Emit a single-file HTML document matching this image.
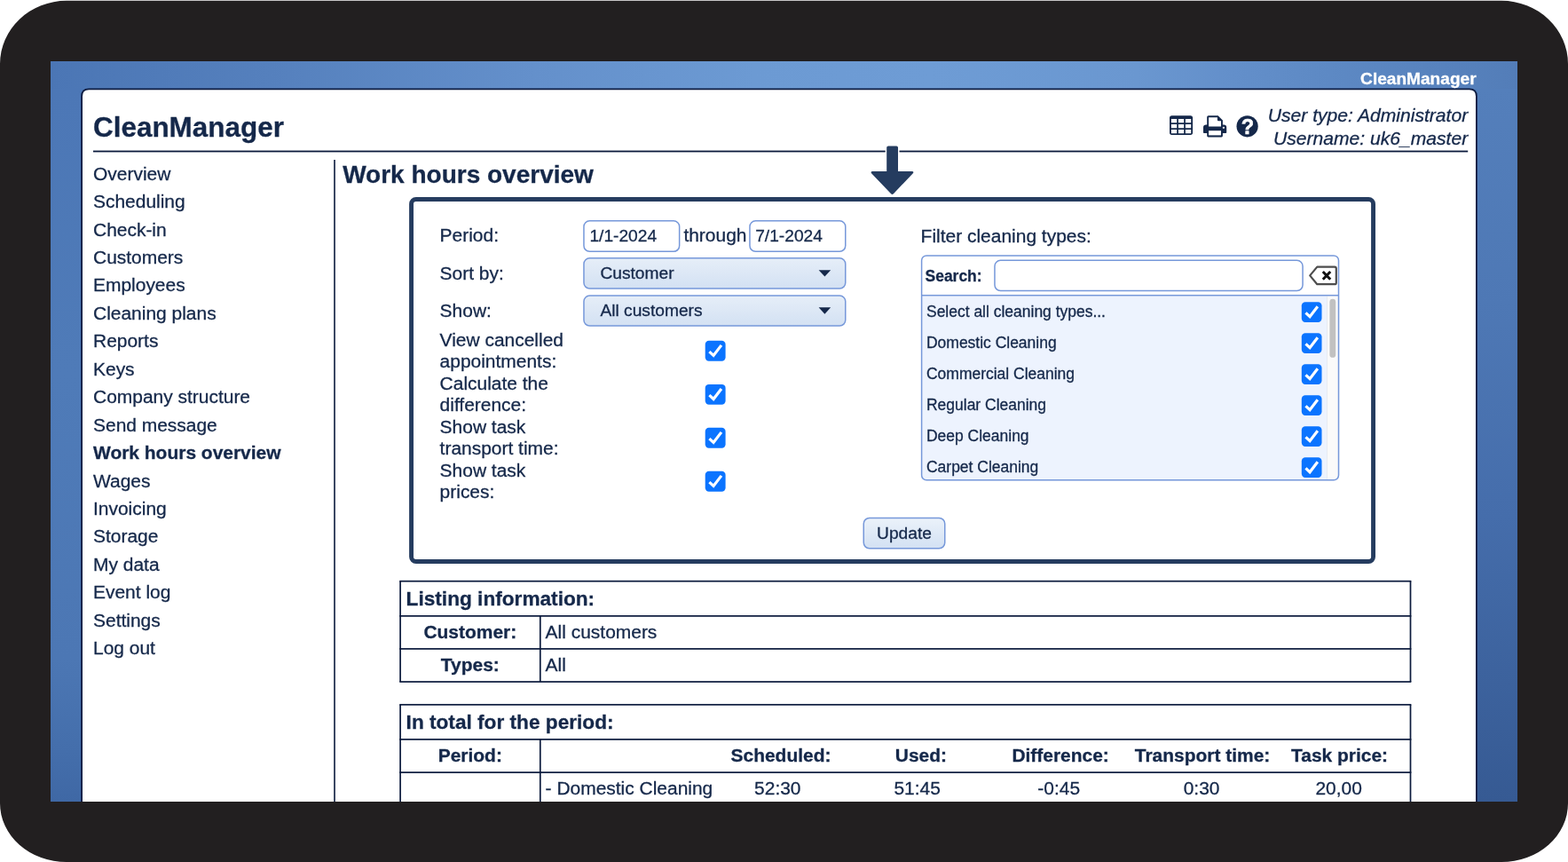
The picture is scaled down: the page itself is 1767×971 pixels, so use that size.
<!DOCTYPE html>
<html lang="en">
<head>
<meta charset="utf-8">
<title>CleanManager - Work hours overview</title>
<style>
*{box-sizing:border-box;margin:0;padding:0}
html,body{width:1767px;height:971px;overflow:hidden;background:#fff}
body{position:relative;will-change:transform;font-family:"Liberation Sans",Arial,Helvetica,sans-serif;color:#15284a}
#geo{position:absolute;left:0;top:0;width:1767px;height:971px;display:block}
#clip{position:absolute;left:57px;top:69px;width:1653px;height:834px;overflow:hidden}
#txt{position:absolute;left:-57px;top:-69px;width:1767px;height:971px}
.t{position:absolute;white-space:nowrap;line-height:1;-webkit-text-stroke:0.3px currentColor}
h1,h2,a,label{margin:0;padding:0;display:block;color:inherit;text-decoration:none}
</style>
</head>
<body>
<svg id="geo" width="1767" height="971" viewBox="0 0 1767 971">
<defs>
<linearGradient id="bgt" gradientUnits="userSpaceOnUse" x1="57" y1="0" x2="1710" y2="0">
<stop offset="0" stop-color="#4b76b5"/><stop offset="0.15" stop-color="#5580bd"/><stop offset="0.33" stop-color="#6490cb"/><stop offset="0.48" stop-color="#6c9ad3"/><stop offset="0.6" stop-color="#6e9cd5"/><stop offset="0.74" stop-color="#6a97d0"/><stop offset="0.806" stop-color="#638fca"/><stop offset="0.872" stop-color="#5d89c4"/><stop offset="0.938" stop-color="#5883be"/><stop offset="1" stop-color="#537db8"/></linearGradient>
<linearGradient id="bgl" gradientUnits="userSpaceOnUse" x1="0" y1="100" x2="0" y2="903">
<stop offset="0" stop-color="#4c77b6"/><stop offset="0.4" stop-color="#4f7bb8"/><stop offset="0.8" stop-color="#4c77b4"/><stop offset="0.93" stop-color="#446eab"/><stop offset="1" stop-color="#3f68a5"/></linearGradient>
<linearGradient id="bgr" gradientUnits="userSpaceOnUse" x1="0" y1="100" x2="0" y2="903">
<stop offset="0" stop-color="#547fbb"/><stop offset="0.3" stop-color="#4e78b5"/><stop offset="0.6" stop-color="#456dab"/><stop offset="1" stop-color="#365a93"/></linearGradient>
<linearGradient id="sel" x1="0" y1="0" x2="0" y2="1"><stop offset="0" stop-color="#e6eef8"/><stop offset="1" stop-color="#d3e1f3"/></linearGradient>
<linearGradient id="btn" x1="0" y1="0" x2="0" y2="1"><stop offset="0" stop-color="#ebf2fa"/><stop offset="1" stop-color="#d3e1f3"/></linearGradient>
<clipPath id="scr"><rect x="57" y="69" width="1653" height="834"/></clipPath>
<clipPath id="fl"><rect x="1037.85" y="287.15" width="471.4" height="254.4" rx="6"/></clipPath>
</defs>
<path d="M0 72 A75 71.2 0 0 1 75 0.8 H1692 A75 71.2 0 0 1 1767 72 V905 A75 66 0 0 1 1692 971 H75 A75 66 0 0 1 0 905 Z" fill="#221f20"/>
<rect x="57" y="69" width="1653" height="834" fill="url(#bgt)"/>
<rect x="57" y="100" width="40" height="803" fill="url(#bgl)"/>
<rect x="1660" y="100" width="50" height="803" fill="url(#bgr)"/>
<path d="M92.1 904 V108.4 Q92.1 100.4 100.1 100.4 H1655.9 Q1663.9 100.4 1663.9 108.4 V904 Z" fill="#fff" stroke="#0c1b40" stroke-width="1.8" clip-path="url(#scr)"/>
<rect x="105.00" y="169.60" width="1549.20" height="1.8" fill="#0b1a3c"/>
<g transform="translate(1318 130.2)" fill="#15284a">
<path fill-rule="evenodd" d="M2.6 0 H23.5 Q26.1 0 26.1 2.6 V19.1 Q26.1 21.7 23.5 21.7 H2.6 Q0 21.7 0 19.1 V2.6 Q0 0 2.6 0 Z
M1.9 3.8 V8.0 H8.2 V3.8 Z M9.95 3.8 V8.0 H16.15 V3.8 Z M17.9 3.8 V8.0 H24.2 V3.8 Z
M1.9 9.8 V14.0 H8.2 V9.8 Z M9.95 9.8 V14.0 H16.15 V9.8 Z M17.9 9.8 V14.0 H24.2 V9.8 Z
M1.9 15.8 V20.0 H8.2 V15.8 Z M9.95 15.8 V20.0 H16.15 V15.8 Z M17.9 15.8 V20.0 H24.2 V15.8 Z"/></g>
<g transform="translate(1356 130.2)">
<path d="M0 13.4 Q0 10.2 3.2 10.2 H23 Q26.2 10.2 26.2 13.4 V19 Q26.2 19.8 25.4 19.8 H0.8 Q0 19.8 0 19 Z" fill="#15284a"/>
<path d="M4.2 13 V1.6 Q4.2 0 5.8 0 H16.6 L21.9 5.3 V13 Z" fill="#15284a"/>
<path d="M6.1 12.3 V1.95 H15.9 V4.9 Q15.9 6.1 17.1 6.1 H20 V12.3 Z" fill="#fff"/>
<rect x="4.2" y="15.2" width="17.7" height="9" rx="1.4" fill="#15284a"/>
<rect x="6.1" y="17" width="13.9" height="5.2" fill="#fff"/>
<circle cx="22.9" cy="13.6" r="1.15" fill="#fff"/>
</g>
<circle cx="1405.6" cy="142.3" r="12.1" fill="#15284a"/>
<rect x="376.20" y="180.00" width="1.6" height="723.00" fill="#0b1a3c"/>
<rect x="463.55" y="224.45" width="1084" height="408.05" rx="5.2" fill="#fff" stroke="#253c5f" stroke-width="4.9"/>
<path d="M1001 164.4 H1010.2 Q1012 164.4 1012 166.2 V193.1 H1027.6 Q1030.6 193.1 1028.6 195.4 L1006.9 218.3 Q1005.5 219.7 1004.1 218.3 L982.3 195.4 Q980.4 193.1 983.4 193.1 H999.2 V166.2 Q999.2 164.4 1001 164.4 Z" fill="#253c5f" stroke="#fff" stroke-width="3" paint-order="stroke"/>
<g transform="translate(794.70 383.80) scale(0.9957)"><rect width="23" height="23" rx="4.2" fill="#0b74ff"/><path d="M4.7 12.3 L9.4 16.7 L18.3 5.1" fill="none" stroke="#fff" stroke-width="3.2"/></g>
<g transform="translate(794.70 432.90) scale(0.9957)"><rect width="23" height="23" rx="4.2" fill="#0b74ff"/><path d="M4.7 12.3 L9.4 16.7 L18.3 5.1" fill="none" stroke="#fff" stroke-width="3.2"/></g>
<g transform="translate(794.70 481.80) scale(0.9957)"><rect width="23" height="23" rx="4.2" fill="#0b74ff"/><path d="M4.7 12.3 L9.4 16.7 L18.3 5.1" fill="none" stroke="#fff" stroke-width="3.2"/></g>
<g transform="translate(794.70 530.80) scale(0.9957)"><rect width="23" height="23" rx="4.2" fill="#0b74ff"/><path d="M4.7 12.3 L9.4 16.7 L18.3 5.1" fill="none" stroke="#fff" stroke-width="3.2"/></g>
<rect x="657.95" y="248.85" width="107.70" height="34.40" rx="6.5" fill="#fff" stroke="#7698da" stroke-width="1.5"/>
<rect x="844.95" y="248.85" width="107.80" height="34.40" rx="6.5" fill="#fff" stroke="#7698da" stroke-width="1.5"/>
<rect x="657.95" y="290.85" width="294.80" height="34.20" rx="6.5" fill="url(#sel)" stroke="#7698da" stroke-width="1.5"/>
<path d="M922.6 304.2 H936.2 L929.4 311.6 Z" fill="#15284a"/>
<rect x="657.95" y="333.05" width="294.80" height="34.00" rx="6.5" fill="url(#sel)" stroke="#7698da" stroke-width="1.5"/>
<path d="M922.6 346.3 H936.2 L929.4 353.7 Z" fill="#15284a"/>
<g clip-path="url(#fl)"><rect x="1038" y="287.5" width="472" height="254" fill="#fff"/><rect x="1038" y="332.8" width="472" height="210" fill="#edf3fe"/><rect x="1495.2" y="333.5" width="13.4" height="208" fill="#fafafa"/><rect x="1495" y="333.5" width="0.8" height="208" fill="#e4e8ef"/></g>
<rect x="1038.50" y="331.95" width="470.00" height="1.5" fill="#7698da"/>
<rect x="1498.4" y="336.8" width="6.8" height="66" rx="3.4" fill="#c1c1c1"/>
<rect x="1038.6" y="287.9" width="469.9" height="252.9" rx="5.5" fill="none" stroke="#7698da" stroke-width="1.5"/>
<rect x="1120.95" y="293.35" width="347.10" height="34.20" rx="6.5" fill="#fff" stroke="#7698da" stroke-width="1.5"/>
<g transform="translate(1474 298)">
<path d="M10.3 2.6 H30 Q31.8 2.6 31.8 4.4 V20.4 Q31.8 22.2 30 22.2 H10.3 L2.2 12.4 Z" fill="#fff" stroke="#4d4d4d" stroke-width="2.2" stroke-linejoin="round"/>
<path d="M16.8 8 L25.2 16.8 M25.2 8 L16.8 16.8" stroke="#111" stroke-width="3" fill="none"/></g>
<g transform="translate(1466.80 340.20) scale(0.9870)"><rect width="23" height="23" rx="4.2" fill="#0b74ff"/><path d="M4.7 12.3 L9.4 16.7 L18.3 5.1" fill="none" stroke="#fff" stroke-width="3.2"/></g>
<g transform="translate(1466.80 375.22) scale(0.9870)"><rect width="23" height="23" rx="4.2" fill="#0b74ff"/><path d="M4.7 12.3 L9.4 16.7 L18.3 5.1" fill="none" stroke="#fff" stroke-width="3.2"/></g>
<g transform="translate(1466.80 410.24) scale(0.9870)"><rect width="23" height="23" rx="4.2" fill="#0b74ff"/><path d="M4.7 12.3 L9.4 16.7 L18.3 5.1" fill="none" stroke="#fff" stroke-width="3.2"/></g>
<g transform="translate(1466.80 445.26) scale(0.9870)"><rect width="23" height="23" rx="4.2" fill="#0b74ff"/><path d="M4.7 12.3 L9.4 16.7 L18.3 5.1" fill="none" stroke="#fff" stroke-width="3.2"/></g>
<g transform="translate(1466.80 480.28) scale(0.9870)"><rect width="23" height="23" rx="4.2" fill="#0b74ff"/><path d="M4.7 12.3 L9.4 16.7 L18.3 5.1" fill="none" stroke="#fff" stroke-width="3.2"/></g>
<g transform="translate(1466.80 515.30) scale(0.9870)"><rect width="23" height="23" rx="4.2" fill="#0b74ff"/><path d="M4.7 12.3 L9.4 16.7 L18.3 5.1" fill="none" stroke="#fff" stroke-width="3.2"/></g>
<rect x="973.25" y="583.45" width="91.50" height="34.30" rx="6.5" fill="url(#btn)" stroke="#7698da" stroke-width="1.5"/>
<rect x="450.25" y="653.85" width="1140.10" height="1.7" fill="#0b1a3c"/>
<rect x="450.25" y="693.05" width="1140.10" height="1.7" fill="#0b1a3c"/>
<rect x="450.25" y="730.05" width="1140.10" height="1.7" fill="#0b1a3c"/>
<rect x="450.25" y="767.15" width="1140.10" height="1.7" fill="#0b1a3c"/>
<rect x="450.25" y="654.70" width="1.7" height="113.30" fill="#0b1a3c"/>
<rect x="1588.65" y="654.70" width="1.7" height="113.30" fill="#0b1a3c"/>
<rect x="607.95" y="693.90" width="1.7" height="74.10" fill="#0b1a3c"/>
<rect x="450.25" y="792.95" width="1140.10" height="1.7" fill="#0b1a3c"/>
<rect x="450.25" y="832.05" width="1140.10" height="1.7" fill="#0b1a3c"/>
<rect x="450.25" y="869.25" width="1140.10" height="1.7" fill="#0b1a3c"/>
<rect x="450.25" y="793.80" width="1.7" height="109.20" fill="#0b1a3c"/>
<rect x="1588.65" y="793.80" width="1.7" height="109.20" fill="#0b1a3c"/>
<rect x="607.95" y="832.90" width="1.7" height="70.10" fill="#0b1a3c"/>
</svg>
<div id="clip"><div id="txt">
<div class="t" style="right:103.40px;top:79.00px;font-size:19.1px;font-weight:700;color:#fff;">CleanManager</div>
<h1 class="t" style="left:105.00px;top:128.00px;font-size:31.45px;font-weight:700;">CleanManager</h1>
<div class="t" style="right:112.80px;top:119.00px;font-size:21.1px;font-style:italic;">User type: Administrator</div>
<div class="t" style="right:112.80px;top:145.00px;font-size:21.1px;font-style:italic;">Username: uk6_master</div>
<div class="t" style="left:1105.90px;width:600px;text-align:center;top:132.00px;font-size:23.5px;font-weight:700;color:#fff;-webkit-text-stroke:0.6px #fff;">?</div>
<nav>
<a class="t" style="left:105.00px;top:186.00px;font-size:20.96px;">Overview</a>
<a class="t" style="left:105.00px;top:217.00px;font-size:20.96px;">Scheduling</a>
<a class="t" style="left:105.00px;top:249.00px;font-size:20.96px;">Check-in</a>
<a class="t" style="left:105.00px;top:280.00px;font-size:20.96px;">Customers</a>
<a class="t" style="left:105.00px;top:311.00px;font-size:20.96px;">Employees</a>
<a class="t" style="left:105.00px;top:343.00px;font-size:20.96px;">Cleaning plans</a>
<a class="t" style="left:105.00px;top:374.00px;font-size:20.96px;">Reports</a>
<a class="t" style="left:105.00px;top:406.00px;font-size:20.96px;">Keys</a>
<a class="t" style="left:105.00px;top:437.00px;font-size:20.96px;">Company structure</a>
<a class="t" style="left:105.00px;top:469.00px;font-size:20.96px;">Send message</a>
<a class="t" style="left:105.00px;top:500.00px;font-size:20.96px;font-weight:700;">Work hours overview</a>
<a class="t" style="left:105.00px;top:532.00px;font-size:20.96px;">Wages</a>
<a class="t" style="left:105.00px;top:563.00px;font-size:20.96px;">Invoicing</a>
<a class="t" style="left:105.00px;top:594.00px;font-size:20.96px;">Storage</a>
<a class="t" style="left:105.00px;top:626.00px;font-size:20.96px;">My data</a>
<a class="t" style="left:105.00px;top:657.00px;font-size:20.96px;">Event log</a>
<a class="t" style="left:105.00px;top:689.00px;font-size:20.96px;">Settings</a>
<a class="t" style="left:105.00px;top:720.00px;font-size:20.96px;">Log out</a>
</nav>
<h2 class="t" style="left:386.20px;top:183.00px;font-size:28px;font-weight:700;">Work hours overview</h2>
<div class="t" style="left:495.60px;top:255.00px;font-size:20.96px;">Period:</div>
<div class="t" style="left:495.60px;top:298.00px;font-size:20.96px;">Sort by:</div>
<div class="t" style="left:495.60px;top:340.00px;font-size:20.96px;">Show:</div>
<label class="t" style="left:495.60px;top:373.00px;font-size:20.96px;">View cancelled</label>
<label class="t" style="left:495.60px;top:397.00px;font-size:20.96px;">appointments:</label>
<label class="t" style="left:495.60px;top:422.00px;font-size:20.96px;">Calculate the</label>
<label class="t" style="left:495.60px;top:446.00px;font-size:20.96px;">difference:</label>
<label class="t" style="left:495.60px;top:471.00px;font-size:20.96px;">Show task</label>
<label class="t" style="left:495.60px;top:495.00px;font-size:20.96px;">transport time:</label>
<label class="t" style="left:495.60px;top:520.00px;font-size:20.96px;">Show task</label>
<label class="t" style="left:495.60px;top:544.00px;font-size:20.96px;">prices:</label>
<div class="t" style="left:664.40px;top:256.00px;font-size:19.2px;">1/1-2024</div>
<div class="t" style="left:770.40px;top:255.00px;font-size:20.96px;">through</div>
<div class="t" style="left:851.20px;top:256.00px;font-size:19.2px;">7/1-2024</div>
<div class="t" style="left:676.40px;top:298.00px;font-size:19.2px;">Customer</div>
<div class="t" style="left:676.40px;top:340.00px;font-size:19.2px;">All customers</div>
<div class="t" style="left:1037.60px;top:256.00px;font-size:20.96px;">Filter cleaning types:</div>
<div class="t" style="left:1042.60px;top:303.00px;font-size:17.45px;font-weight:700;">Search:</div>
<div class="t" style="left:1044.00px;top:343.00px;font-size:17.48px;">Select all cleaning types...</div>
<div class="t" style="left:1044.00px;top:378.00px;font-size:17.48px;">Domestic Cleaning</div>
<div class="t" style="left:1044.00px;top:413.00px;font-size:17.48px;">Commercial Cleaning</div>
<div class="t" style="left:1044.00px;top:448.00px;font-size:17.48px;">Regular Cleaning</div>
<div class="t" style="left:1044.00px;top:483.00px;font-size:17.48px;">Deep Cleaning</div>
<div class="t" style="left:1044.00px;top:518.00px;font-size:17.48px;">Carpet Cleaning</div>
<div class="t" style="left:719.00px;width:600px;text-align:center;top:591.00px;font-size:19.2px;">Update</div>
<div class="t" style="left:457.60px;top:663.00px;font-size:22.65px;font-weight:700;">Listing information:</div>
<div class="t" style="left:229.80px;width:600px;text-align:center;top:702.00px;font-size:20.96px;font-weight:700;">Customer:</div>
<div class="t" style="left:614.60px;top:702.00px;font-size:20.96px;">All customers</div>
<div class="t" style="left:229.80px;width:600px;text-align:center;top:739.00px;font-size:20.96px;font-weight:700;">Types:</div>
<div class="t" style="left:614.60px;top:739.00px;font-size:20.96px;">All</div>
<div class="t" style="left:457.60px;top:802.00px;font-size:22.65px;font-weight:700;">In total for the period:</div>
<div class="t" style="left:229.80px;width:600px;text-align:center;top:841.00px;font-size:20.96px;font-weight:700;">Period:</div>
<div class="t" style="left:823.50px;top:841.00px;font-size:20.96px;font-weight:700;">Scheduled:</div>
<div class="t" style="left:1008.80px;top:841.00px;font-size:20.96px;font-weight:700;">Used:</div>
<div class="t" style="left:1140.40px;top:841.00px;font-size:20.96px;font-weight:700;">Difference:</div>
<div class="t" style="left:1278.80px;top:841.00px;font-size:20.96px;font-weight:700;">Transport time:</div>
<div class="t" style="left:1455.00px;top:841.00px;font-size:20.96px;font-weight:700;">Task price:</div>
<div class="t" style="left:614.60px;top:878.00px;font-size:20.96px;">- Domestic Cleaning</div>
<div class="t" style="left:576.30px;width:600px;text-align:center;top:878.00px;font-size:20.96px;">52:30</div>
<div class="t" style="left:733.70px;width:600px;text-align:center;top:878.00px;font-size:20.96px;">51:45</div>
<div class="t" style="left:893.20px;width:600px;text-align:center;top:878.00px;font-size:20.96px;">-0:45</div>
<div class="t" style="left:1054.10px;width:600px;text-align:center;top:878.00px;font-size:20.96px;">0:30</div>
<div class="t" style="left:1208.70px;width:600px;text-align:center;top:878.00px;font-size:20.96px;">20,00</div>
</div></div>
</body>
</html>
